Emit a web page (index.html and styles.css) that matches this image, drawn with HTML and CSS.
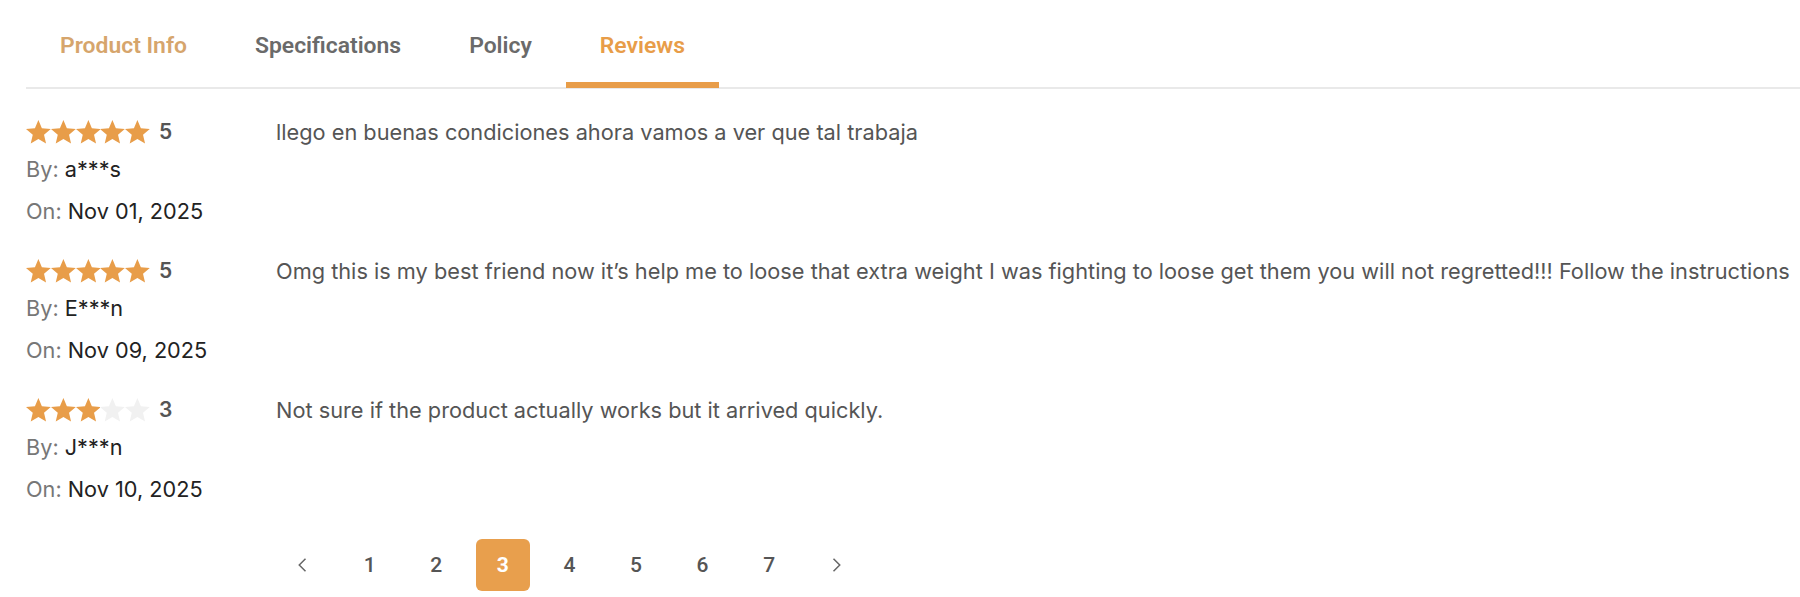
FILE: index.html
```html
<!DOCTYPE html>
<html lang="en">
<head>
<meta charset="utf-8">
<title>Reviews</title>
<link rel="stylesheet" href="styles.css">
</head>
<body>
<div class="page">
  <nav class="tabs">
    <div class="tab tab-visited">Product Info</div>
    <div class="tab">Specifications</div>
    <div class="tab">Policy</div>
    <div class="tab tab-active">Reviews</div>
  </nav>

  <div class="reviews">
    <div class="review">
      <div class="meta">
        <div class="rating">
          <svg class="star on" viewBox="2 2 20 19"><path d="M12 17.27L18.18 21l-1.64-7.03L22 9.24l-7.19-.61L12 2 9.19 8.63 2 9.24l5.46 4.73L5.82 21z"/></svg>
          <svg class="star on" viewBox="2 2 20 19"><path d="M12 17.27L18.18 21l-1.64-7.03L22 9.24l-7.19-.61L12 2 9.19 8.63 2 9.24l5.46 4.73L5.82 21z"/></svg>
          <svg class="star on" viewBox="2 2 20 19"><path d="M12 17.27L18.18 21l-1.64-7.03L22 9.24l-7.19-.61L12 2 9.19 8.63 2 9.24l5.46 4.73L5.82 21z"/></svg>
          <svg class="star on" viewBox="2 2 20 19"><path d="M12 17.27L18.18 21l-1.64-7.03L22 9.24l-7.19-.61L12 2 9.19 8.63 2 9.24l5.46 4.73L5.82 21z"/></svg>
          <svg class="star on" viewBox="2 2 20 19"><path d="M12 17.27L18.18 21l-1.64-7.03L22 9.24l-7.19-.61L12 2 9.19 8.63 2 9.24l5.46 4.73L5.82 21z"/></svg>
          <span class="score">5</span>
        </div>
        <div class="by"><span class="label">By:</span> a***s</div>
        <div class="on"><span class="label">On:</span> Nov 01, 2025</div>
      </div>
      <p class="text">llego en buenas condiciones ahora vamos a ver que tal trabaja</p>
    </div>

    <div class="review">
      <div class="meta">
        <div class="rating">
          <svg class="star on" viewBox="2 2 20 19"><path d="M12 17.27L18.18 21l-1.64-7.03L22 9.24l-7.19-.61L12 2 9.19 8.63 2 9.24l5.46 4.73L5.82 21z"/></svg>
          <svg class="star on" viewBox="2 2 20 19"><path d="M12 17.27L18.18 21l-1.64-7.03L22 9.24l-7.19-.61L12 2 9.19 8.63 2 9.24l5.46 4.73L5.82 21z"/></svg>
          <svg class="star on" viewBox="2 2 20 19"><path d="M12 17.27L18.18 21l-1.64-7.03L22 9.24l-7.19-.61L12 2 9.19 8.63 2 9.24l5.46 4.73L5.82 21z"/></svg>
          <svg class="star on" viewBox="2 2 20 19"><path d="M12 17.27L18.18 21l-1.64-7.03L22 9.24l-7.19-.61L12 2 9.19 8.63 2 9.24l5.46 4.73L5.82 21z"/></svg>
          <svg class="star on" viewBox="2 2 20 19"><path d="M12 17.27L18.18 21l-1.64-7.03L22 9.24l-7.19-.61L12 2 9.19 8.63 2 9.24l5.46 4.73L5.82 21z"/></svg>
          <span class="score">5</span>
        </div>
        <div class="by"><span class="label">By:</span> E***n</div>
        <div class="on"><span class="label">On:</span> Nov 09, 2025</div>
      </div>
      <p class="text">Omg this is my best friend now it’s help me to loose that extra weight I was fighting to loose get them you will not regretted!!! Follow the instructions</p>
    </div>

    <div class="review">
      <div class="meta">
        <div class="rating">
          <svg class="star on" viewBox="2 2 20 19"><path d="M12 17.27L18.18 21l-1.64-7.03L22 9.24l-7.19-.61L12 2 9.19 8.63 2 9.24l5.46 4.73L5.82 21z"/></svg>
          <svg class="star on" viewBox="2 2 20 19"><path d="M12 17.27L18.18 21l-1.64-7.03L22 9.24l-7.19-.61L12 2 9.19 8.63 2 9.24l5.46 4.73L5.82 21z"/></svg>
          <svg class="star on" viewBox="2 2 20 19"><path d="M12 17.27L18.18 21l-1.64-7.03L22 9.24l-7.19-.61L12 2 9.19 8.63 2 9.24l5.46 4.73L5.82 21z"/></svg>
          <svg class="star off" viewBox="2 2 20 19"><path d="M12 17.27L18.18 21l-1.64-7.03L22 9.24l-7.19-.61L12 2 9.19 8.63 2 9.24l5.46 4.73L5.82 21z"/></svg>
          <svg class="star off" viewBox="2 2 20 19"><path d="M12 17.27L18.18 21l-1.64-7.03L22 9.24l-7.19-.61L12 2 9.19 8.63 2 9.24l5.46 4.73L5.82 21z"/></svg>
          <span class="score">3</span>
        </div>
        <div class="by"><span class="label">By:</span> J***n</div>
        <div class="on"><span class="label">On:</span> Nov 10, 2025</div>
      </div>
      <p class="text">Not sure if the product actually works but it arrived quickly.</p>
    </div>
  </div>

  <div class="pager">
    <span class="pg arrow"><svg viewBox="0 0 16 16"><path d="M10 3L5 8l5 5"/></svg></span>
    <span class="pg">1</span>
    <span class="pg">2</span>
    <span class="pg current">3</span>
    <span class="pg">4</span>
    <span class="pg">5</span>
    <span class="pg">6</span>
    <span class="pg">7</span>
    <span class="pg arrow"><svg viewBox="0 0 16 16"><path d="M6 3l5 5-5 5"/></svg></span>
  </div>
</div>
</body>
</html>
```

FILE: styles.css
```css
* { box-sizing: border-box; }

html, body {
  margin: 0;
  padding: 0;
  background: #ffffff;
}

body {
  font-family: Inter, "Noto Sans", sans-serif;
  color: #222222;
}

.page {
  padding-left: 26px;
}

.tabs {
  display: flex;
  border-bottom: 2px solid #e9e9e9;
  height: 89px;
}

.tab {
  position: relative;
  padding: 28px 34px 0 34px;
  font-family: Roboto, Inter, sans-serif;
  font-size: 22.9px;
  font-weight: 600;
  line-height: 36px;
  color: #6a6a6a;
}

.tab-visited { color: #d6a56c; }

.tab-active { color: #e89d49; }

.tab-active::after {
  content: "";
  position: absolute;
  left: 0;
  right: 0;
  bottom: -1px;
  height: 6px;
  background: #e89d49;
}

.reviews {
  padding-top: 30px;
}

.review {
  display: flex;
  padding-bottom: 34px;
}

.meta {
  width: 250px;
  flex: none;
  font-size: 21.7px;
  line-height: 26px;
}

.rating {
  display: flex;
  align-items: center;
  height: 26px;
  margin-bottom: 11px;
}

.star {
  width: 24.8px;
  height: 23.6px;
}

.star.on { fill: #e89d49; }
.star.off { fill: #f1f1f1; }

.score {
  margin-left: 9px;
  font-weight: 600;
  color: #555555;
  font-size: 21px;
}

.by { margin-bottom: 16px; }

.label { color: #777777; }

.text {
  margin: 0;
  font-size: 21.75px;
  line-height: 26px;
  color: #555555;
  white-space: nowrap;
}

.pager {
  display: flex;
  gap: 12.6px;
  padding-left: 250px;
  margin-top: 3px;
}

.pg {
  width: 54px;
  height: 52px;
  display: flex;
  align-items: center;
  justify-content: center;
  font-family: Roboto, Inter, sans-serif;
  font-size: 21px;
  font-weight: 500;
  color: #555555;
  border-radius: 6px;
}

.pg.current {
  background: #e89f4d;
  color: #ffffff;
  font-weight: 700;
}

.arrow svg {
  width: 20px;
  height: 20px;
  fill: none;
  stroke: #666666;
  stroke-width: 1.2;
}
```
